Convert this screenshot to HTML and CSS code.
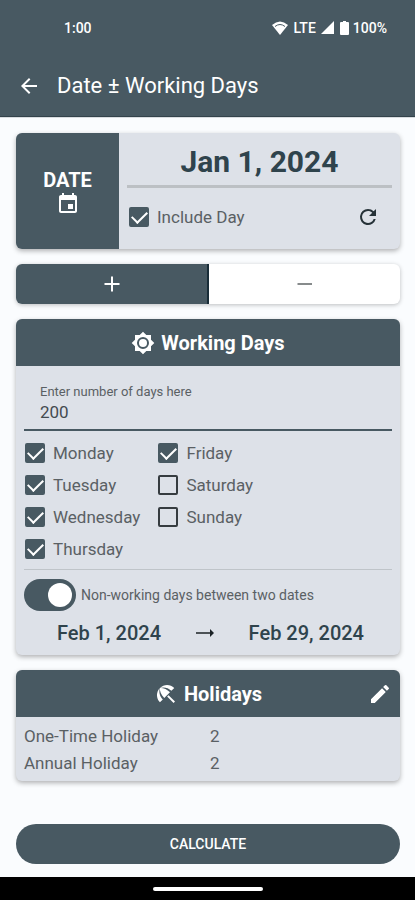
FILE: index.html
```html
<!DOCTYPE html>
<html lang="en">
<head>
<meta charset="utf-8">
<meta name="viewport" content="width=device-width, initial-scale=1">
<title>Date ± Working Days</title>
<link rel="stylesheet" href="styles.css">
</head>
<body>
<div class="screen">
  <header class="top">
    <div class="status">
      <span class="time">1:00</span>
      <span class="signals">
        <svg width="16" height="14" viewBox="0 0 16 14"><path d="M0 4Q8-3 16 4L8 14Z" fill="#fff"/><path d="M3 5.500Q8 1.500 13 5.500" fill="none" stroke="#485962" stroke-width="1"/></svg>
        <span class="lte">LTE</span>
        <svg class="cell" width="13" height="13" viewBox="0 0 13 13"><path d="M0 13L13 0V13Z" fill="#fff"/></svg>
        <svg class="battery" width="9" height="14" viewBox="0 0 9 14"><path d="M3 0H6V1H8Q9 1 9 2V13Q9 14 8 14H1Q0 14 0 13V2Q0 1 1 1H3Z" fill="#fff"/></svg>
        <span>100%</span>
      </span>
    </div>
    <div class="appbar">
      <button class="icon-button" type="button" aria-label="Back">
        <svg width="24" height="24" viewBox="0 0 24 24" fill="#fff"><path d="M20 11H7.8l5.6-5.6L12 4l-8 8 8 8 1.4-1.4L7.8 13H20z"/></svg>
      </button>
      <h1>Date ± Working Days</h1>
    </div>
  </header>

  <main class="content">
    <section class="card date-card">
      <button class="date-button" type="button">
        <span>DATE</span>
        <svg width="24" height="24" viewBox="0 0 24 24" fill="#fff"><path d="M17 12h-5v5h5zM16 1v2H8V1H6v2H5c-1.1 0-2 .9-2 2v14c0 1.100.9 2 2 2h14c1.100 0 2-.9 2-2V5c0-1.100-.9-2-2-2h-1V1zm3 18H5V8h14z"/></svg>
      </button>
      <div class="date-body">
        <button class="date-value" type="button">Jan 1, 2024</button>
        <div class="date-options">
          <label class="check"><input type="checkbox" checked><span>Include Day</span></label>
          <button class="icon-button reset" type="button" aria-label="Reset">
            <svg width="24" height="24" viewBox="0 0 24 24" fill="#263238"><path d="M17.650 6.350A7.960 7.960 0 0 0 12 4a8 8 0 1 0 7.730 10h-2.080A6 6 0 1 1 12 6c1.660 0 3.140.690 4.220 1.780L13 11h7V4z"/></svg>
          </button>
        </div>
      </div>
    </section>

    <div class="segments">
      <button class="segment active" type="button" aria-label="Add" aria-pressed="true">
        <svg width="24" height="24" viewBox="0 0 24 24"><path d="M12 4.500v15M4.500 12h15" stroke="#fff" stroke-width="2"/></svg>
      </button>
      <button class="segment" type="button" aria-label="Subtract" aria-pressed="false">
        <svg width="24" height="24" viewBox="0 0 24 24"><path d="M4.500 12h14.500" stroke="#5f6466" stroke-width="1.600"/></svg>
      </button>
    </div>

    <section class="card">
      <div class="card-head">
        <svg width="24" height="24" viewBox="0 0 24 24"><path fill="#fff" fill-rule="evenodd" d="M20 8.690V4h-4.690L12 .690 8.690 4H4v4.690L.690 12 4 15.310V20h4.690L12 23.310 15.310 20H20v-4.690L23.310 12zM12 18a6 6 0 1 1 0-12 6 6 0 0 1 0 12z"/><circle cx="12" cy="12" r="4" fill="#fff"/></svg>
        <h2>Working Days</h2>
      </div>
      <div class="work-body">
        <div class="field">
          <label for="days">Enter number of days here</label>
          <input id="days" type="text" inputmode="numeric" value="200">
        </div>
        <div class="days">
          <label class="check"><input type="checkbox" checked><span>Monday</span></label>
          <label class="check"><input type="checkbox" checked><span>Tuesday</span></label>
          <label class="check"><input type="checkbox" checked><span>Wednesday</span></label>
          <label class="check"><input type="checkbox" checked><span>Thursday</span></label>
          <label class="check"><input type="checkbox" checked><span>Friday</span></label>
          <label class="check"><input type="checkbox"><span>Saturday</span></label>
          <label class="check"><input type="checkbox"><span>Sunday</span></label>
        </div>
        <label class="switch-row"><input class="switch" type="checkbox" role="switch" checked><span>Non-working days between two dates</span></label>
        <div class="range">
          <button type="button">Feb 1, 2024</button>
          <svg width="20" height="12" viewBox="0 0 20 12"><path d="M1 6H17" fill="none" stroke="#1b2226" stroke-width="1.600"/><path d="M15 2L19 6L15 10Z" fill="#1b2226"/></svg>
          <button type="button">Feb 29, 2024</button>
        </div>
      </div>
    </section>

    <section class="card">
      <div class="card-head holidays-head">
        <span></span>
        <div class="head-title">
          <svg width="24" height="24" viewBox="0 0 24 24" fill="#fff"><path d="M13.130 14.560l1.430-1.430 6.440 6.440L19.570 21zM17.420 8.830l2.860-2.860c-3.950-3.950-10.350-3.960-14.300-.020 3.930-1.300 8.310-.250 11.440 2.880zM5.950 5.980C2 9.930 2.010 16.330 5.960 20.280l2.860-2.860C5.700 14.290 4.650 9.910 5.950 5.980zM5.970 5.960l-.010.010c-.380 3.010 1.170 6.880 4.300 10.020l5.730-5.730C12.860 7.130 8.980 5.580 5.970 5.960z"/></svg>
          <h2>Holidays</h2>
        </div>
        <button class="icon-button" type="button" aria-label="Edit holidays">
          <svg width="24" height="24" viewBox="0 0 24 24" fill="#fff"><path d="M3 17.250V21h3.750L17.810 9.940l-3.750-3.750zM20.710 7.040a1 1 0 0 0 0-1.410l-2.340-2.340a1 1 0 0 0-1.410 0l-1.830 1.830 3.750 3.750z"/></svg>
        </button>
      </div>
      <table class="holidays">
        <tbody>
          <tr><th scope="row">One-Time Holiday</th><td>2</td></tr>
          <tr><th scope="row">Annual Holiday</th><td>2</td></tr>
        </tbody>
      </table>
    </section>

    <button class="calculate" type="button">CALCULATE</button>
  </main>

  <footer class="navbar"><span class="handle"></span></footer>
</div>
</body>
</html>
```
FILE: styles.css
```css
* {
  box-sizing: border-box;
}

:root {
  --slate: #485962;
  --ink: #2f434c;
  --card: #dde1e8;
  --muted: #5a6064;
}

body {
  margin: 0;
  background: #fafcfe;
  color: var(--muted);
  font-family: Roboto, "Liberation Sans", sans-serif;
  font-size: 17px;
}

button {
  margin: 0;
  padding: 0;
  border: 0;
  background: none;
  color: inherit;
  font: inherit;
  cursor: pointer;
}

h1,
h2 {
  margin: 0;
}

svg {
  display: block;
  flex: none;
}

.screen {
  display: flex;
  flex-direction: column;
  min-height: 100vh;
}

.top {
  background: var(--slate);
  color: #fff;
  box-shadow: 0 1px 1px #33434b;
}

.status {
  display: flex;
  justify-content: space-between;
  align-items: center;
  height: 55px;
  padding: 0 28px 0 64px;
  font-size: 14px;
  font-weight: 500;
}

.signals {
  display: flex;
  align-items: center;
}

.lte {
  margin: 0 5px 0 6px;
}

.battery {
  margin: 0 4px 0 6px;
}

.appbar {
  display: flex;
  align-items: center;
  gap: 16px;
  height: 61px;
  padding: 0 17px;
}

.appbar h1 {
  font-size: 22px;
  font-weight: 400;
}

.icon-button {
  flex: none;
}

.content {
  flex: 1;
  display: flex;
  flex-direction: column;
  gap: 15px;
  padding: 17px 15px 13px 16px;
}

.card {
  overflow: hidden;
  border-radius: 6px;
  background: var(--card);
  box-shadow: 0 2px 5px rgba(0, 0, 0, 0.3);
}

.date-card {
  display: flex;
  height: 116px;
}

.date-button {
  display: flex;
  flex-direction: column;
  align-items: center;
  justify-content: center;
  width: 103px;
  padding-top: 2px;
  background: var(--slate);
  color: #fff;
  font-size: 20px;
  font-weight: 700;
}

.date-body {
  flex: 1;
  padding: 4px 8px 0;
}

.date-value {
  width: 100%;
  height: 51px;
  border-bottom: 3px solid #bcc0c4;
  color: var(--ink);
  font-size: 30px;
  font-weight: 700;
}

.date-options {
  display: flex;
  align-items: center;
  justify-content: space-between;
  height: 58px;
  padding: 0 12px 0 2px;
}

.check {
  display: flex;
  align-items: center;
  gap: 8px;
}

.check input {
  appearance: none;
  width: 20px;
  height: 20px;
  margin: 0;
  border: 2px solid #363c40;
  border-radius: 2px;
}

.check input:checked {
  display: grid;
  place-items: center;
  border-color: var(--slate);
  background: var(--slate);
}

.check input:checked::before {
  content: "";
  width: 13px;
  height: 7px;
  border: solid #fff;
  border-width: 0 0 2px 2px;
  transform: translateY(-2px) rotate(-45deg);
}

.segments {
  display: flex;
  height: 40px;
  overflow: hidden;
  border-radius: 6px;
  background: #fff;
  box-shadow: 0 1px 4px rgba(0, 0, 0, 0.25);
}

.segment {
  flex: 1;
  display: flex;
  align-items: center;
  justify-content: center;
}

.segment.active {
  background: var(--slate);
  border-right: 2px solid #192d38;
}

.card-head {
  display: flex;
  align-items: center;
  justify-content: center;
  gap: 6px;
  height: 47px;
  background: var(--slate);
  color: #fff;
}

.card-head h2 {
  font-size: 20px;
  font-weight: 700;
}

.work-body {
  padding: 0 8px;
}

.field {
  display: flex;
  flex-direction: column;
  height: 65px;
  padding: 18px 16px 0;
  border-bottom: 2px solid var(--slate);
}

.field label {
  font-size: 13px;
  line-height: 16px;
}

.field input {
  width: 100%;
  height: 24px;
  padding: 0;
  border: 0;
  outline: 0;
  background: none;
  color: #444b50;
  font: inherit;
}

.days {
  display: grid;
  grid-template-rows: repeat(4, 32px);
  grid-template-columns: 4fr 7fr;
  grid-auto-flow: column;
  padding: 6px 0 4px 1px;
  border-bottom: 1px solid #bfc4c9;
}

.switch-row {
  display: flex;
  align-items: center;
  gap: 5px;
  height: 49px;
  font-size: 14px;
}

.switch {
  appearance: none;
  display: flex;
  justify-content: flex-end;
  flex: none;
  width: 52px;
  height: 32px;
  margin: 0;
  padding: 4px;
  border-radius: 16px;
  background: var(--slate);
}

.switch:not(:checked) {
  justify-content: flex-start;
  background: #8d979c;
}

.switch::before {
  content: "";
  width: 24px;
  height: 24px;
  border-radius: 50%;
  background: #fff;
}

.range {
  display: flex;
  align-items: center;
  justify-content: space-between;
  height: 36px;
  padding: 0 28px 8px 33px;
  color: var(--ink);
  font-size: 20px;
  font-weight: 500;
}

.holidays-head {
  display: grid;
  grid-template-columns: 24px 1fr 24px;
  padding: 0 8px;
}

.head-title {
  display: flex;
  align-items: center;
  justify-content: center;
  gap: 6px;
}

.holidays {
  width: 100%;
  margin: 5px 0;
  border-collapse: collapse;
}

.holidays th,
.holidays td {
  height: 27px;
  padding: 0;
  font-weight: 400;
  text-align: left;
}

.holidays th {
  width: 194px;
  padding-left: 8px;
}

.calculate {
  height: 40px;
  margin-top: auto;
  border-radius: 20px;
  background: var(--slate);
  color: #fff;
  font-size: 14px;
  font-weight: 500;
}

.navbar {
  display: flex;
  align-items: center;
  justify-content: center;
  height: 23px;
  background: #000;
}

.handle {
  width: 110px;
  height: 4px;
  border-radius: 2px;
  background: #fff;
}
```
